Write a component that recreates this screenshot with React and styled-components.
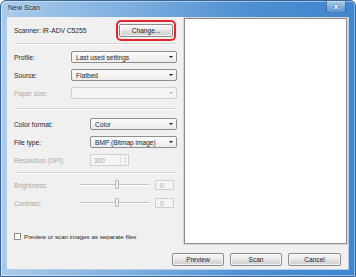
import styled, { createGlobalStyle } from 'styled-components';

const GlobalStyle = createGlobalStyle`
  html, body {
    margin: 0;
    padding: 0;
    background: #ffffff;
  }
  body {
    font-family: "Liberation Sans", Arial, sans-serif;
  }
`

// Window frame
const Window = styled.div`
  width: 356px;
  height: 277px;
  box-sizing: border-box;
  display: flex;
  flex-direction: column;
  padding: 0 6px 6px 5px;
  border: 1px solid #3a6493;
  border-radius: 6px 6px 0 0;
  background: linear-gradient(90deg, #a9cbeb 0%, #7fb0e0 35%, #4d8fd2 70%, #3f86cf 100%);
  box-shadow: inset 0 0 0 1px rgba(255,255,255,0.45);
`
const TitleBar = styled.div`
  height: 16px;
  display: flex;
  align-items: flex-start;
  justify-content: space-between;
`
const Title = styled.span`
  margin: 3px 0 0 2px;
  font-size: 7px;
  color: #1b2a3a;
  text-shadow: 0 0 4px rgba(255,255,255,0.9);
`
const CloseButton = styled.div`
  width: 20px;
  height: 12px;
  margin-right: 3px;
  box-sizing: border-box;
  display: flex;
  align-items: center;
  justify-content: center;
  border: 1px solid rgba(30,60,100,0.55);
  border-top: none;
  border-radius: 0 0 3px 3px;
  background: linear-gradient(180deg, rgba(255,255,255,0.55), rgba(255,255,255,0.15));
  color: #ffffff;
  font-size: 8px;
  font-weight: bold;
  line-height: 1;
  text-shadow: 0 0 2px #30506f;
`

// Client area
const Client = styled.div`
  flex: 1;
  display: flex;
  flex-direction: column;
  background: #f0f0f0;
  border: 1px solid #b7cfe9;
  border-top: none;
`
const Body = styled.div`
  height: 228px;
  display: flex;
`
const Settings = styled.div`
  width: 176px;
  box-sizing: border-box;
  padding: 4px 6px 0 7px;
  display: flex;
  flex-direction: column;
`
const Row = styled.div`
  height: ${p => p.$h || 18}px;
  margin-top: ${p => p.$mt || 0}px;
  display: flex;
  align-items: center;
`
const Label = styled.span`
  width: ${p => p.$w ? `${p.$w}px` : 'auto'};
  flex-shrink: 0;
  font-size: ${p => p.$small ? 6.2 : 6.7}px;
  color: ${p => p.$disabled ? '#a8a8a8' : '#1e1e1e'};
  white-space: nowrap;
`
const Divider = styled.div`
  height: 1px;
  margin-top: ${p => p.$mt}px;
  background: #d5d5d5;
  border-bottom: 1px solid #ffffff;
`
const Highlight = styled.div`
  margin-left: auto;
  margin-right: 1px;
  padding: 2px 1px 2px 1px;
  border: 2px solid #e3262a;
  border-radius: 5px;
  display: flex;
`
const Button = styled.div`
  width: ${p => p.$w || 52}px;
  height: 13px;
  box-sizing: border-box;
  display: flex;
  align-items: center;
  justify-content: center;
  border: 1px solid #8a8a8a;
  border-radius: 2px;
  background: linear-gradient(180deg, #f6f6f6 0%, #ebebeb 48%, #dddddd 52%, #d3d3d3 100%);
  box-shadow: inset 0 0 0 1px rgba(255,255,255,0.7);
  font-size: 6.6px;
  color: #1e1e1e;
`
const Select = styled.div`
  flex: 1;
  height: 12px;
  box-sizing: border-box;
  display: flex;
  align-items: center;
  justify-content: space-between;
  padding: 0 3px 0 4px;
  border: 1px solid ${p => p.$disabled ? '#cfcfcf' : '#8e8e8e'};
  border-radius: 2px;
  background: ${p => p.$disabled ? '#f4f4f4' : 'linear-gradient(180deg, #fbfbfb, #ececec)'};
  font-size: 6.6px;
  color: #1e1e1e;
`
const Arrow = styled.span`
  width: 0;
  height: 0;
  border-left: 2px solid transparent;
  border-right: 2px solid transparent;
  border-top: 2.5px solid ${p => p.$disabled ? '#b8b8b8' : '#1a1a1a'};
`
const SpinBox = styled.div`
  width: 39px;
  height: 12px;
  box-sizing: border-box;
  display: flex;
  align-items: center;
  justify-content: space-between;
  padding-left: 3px;
  border: 1px solid #cfcfcf;
  background: #f4f4f4;
  font-size: 6.6px;
  color: #a8a8a8;
`
const SpinArrows = styled.div`
  width: 7px;
  height: 100%;
  display: flex;
  flex-direction: column;
  align-items: center;
  justify-content: space-evenly;
  border-left: 1px solid #dedede;
`
const SpinArrow = styled.span`
  width: 0;
  height: 0;
  border-left: 1.5px solid transparent;
  border-right: 1.5px solid transparent;
  ${p => p.$up ? 'border-bottom: 2px solid #c0c0c0;' : 'border-top: 2px solid #c0c0c0;'}
`
const Slider = styled.div`
  width: 70px;
  height: 10px;
  position: relative;
  display: flex;
  align-items: center;
`
const Track = styled.div`
  width: 100%;
  height: 1px;
  background: #c4c4c4;
  border-bottom: 1px solid #ffffff;
`
const Thumb = styled.div`
  position: absolute;
  left: 35px;
  top: 0;
  width: 4px;
  height: 9px;
  box-sizing: border-box;
  border: 1px solid #b8b8b8;
  border-radius: 1px;
  background: #f2f2f2;
`
const ValueBox = styled.div`
  width: 19px;
  height: 10px;
  margin-left: 5px;
  box-sizing: border-box;
  padding-left: 4px;
  display: flex;
  align-items: center;
  border: 1px solid #cfcfcf;
  background: #f4f4f4;
  font-size: 6.6px;
  color: #a8a8a8;
`
const CheckBox = styled.div`
  width: 5px;
  height: 5px;
  margin-right: 3px;
  border: 1px solid #8e8f8f;
  background: #fbfbfb;
`
const Preview = styled.div`
  flex: 1;
  margin: 1px 1px 1px 1px;
  border: 1px solid #8c8c8c;
  background: #ffffff;
  box-shadow: 0 0 0 1px #d6d6d6;
`
const Footer = styled.div`
  flex: 1;
  display: flex;
  justify-content: flex-end;
  align-items: flex-start;
  gap: 6px;
  padding: 8px 7px 0 0;
`

const Combo = ({ value, disabled }) => (
  <Select $disabled={disabled}>
    <span>{value}</span>
    <Arrow $disabled={disabled} />
  </Select>
)

const SliderRow = ({ label, mt }) => (
  <Row $mt={mt}>
    <Label $w={66} $disabled>{label}</Label>
    <Slider>
      <Track />
      <Thumb />
    </Slider>
    <ValueBox>0</ValueBox>
  </Row>
)

const App = () => {
  return (
    <>
      <GlobalStyle />
      <Window>
        <TitleBar>
          <Title>New Scan</Title>
          <CloseButton>x</CloseButton>
        </TitleBar>
        <Client>
          <Body>
            <Settings>
              <Row>
                <Label>Scanner: iR-ADV C5255</Label>
                <Highlight>
                  <Button $w={54}>Change...</Button>
                </Highlight>
              </Row>
              <Divider $mt={4} />

              <Row $mt={3}>
                <Label $w={57}>Profile:</Label>
                <Combo value="Last used settings" />
              </Row>
              <Row>
                <Label $w={57}>Source:</Label>
                <Combo value="Flatbed" />
              </Row>
              <Row>
                <Label $w={57} $disabled>Paper size:</Label>
                <Combo value="" disabled />
              </Row>
              <Divider $mt={6} />

              <Row $mt={5}>
                <Label $w={76}>Color format:</Label>
                <Combo value="Color" />
              </Row>
              <Row>
                <Label $w={76}>File type:</Label>
                <Combo value="BMP (Bitmap image)" />
              </Row>
              <Row>
                <Label $w={76} $disabled>Resolution (DPI):</Label>
                <SpinBox>
                  <span>300</span>
                  <SpinArrows>
                    <SpinArrow $up />
                    <SpinArrow />
                  </SpinArrows>
                </SpinBox>
              </Row>
              <Divider $mt={3} />

              <SliderRow label="Brightness:" mt={2} />
              <SliderRow label="Contrast:" />

              <Row $mt={17} $h={14}>
                <CheckBox />
                <Label $small>Preview or scan images as separate files</Label>
              </Row>
            </Settings>
            <Preview />
          </Body>
          <Footer>
            <Button>Preview</Button>
            <Button>Scan</Button>
            <Button $w={53}>Cancel</Button>
          </Footer>
        </Client>
      </Window>
    </>
  );
}

export default App;
